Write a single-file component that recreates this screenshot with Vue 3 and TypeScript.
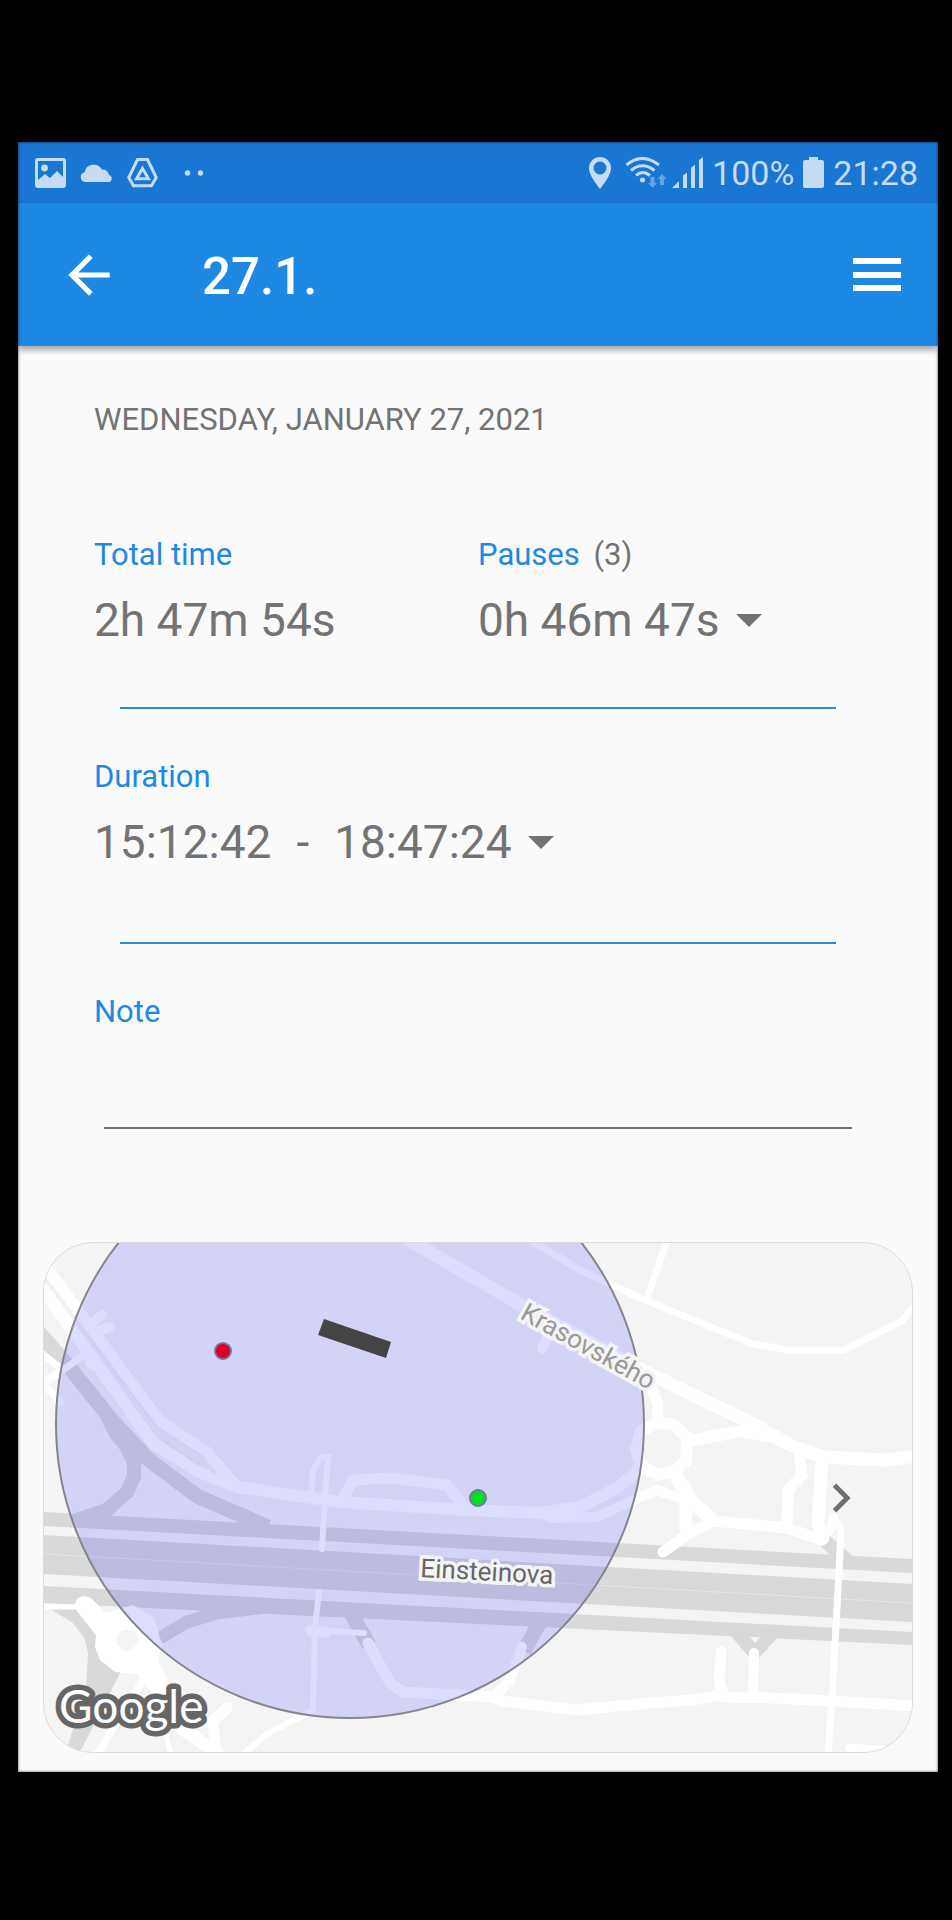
<script setup lang="ts">
import { ref } from 'vue'

interface Road {
  d: string
  w: number
}

const note = ref('')
const day = { short: '27.1.', full: 'Wednesday, January 27, 2021' }
const total = '2h 47m 54s'
const pauses = { count: 3, time: '0h 46m 47s' }
const duration = { from: '15:12:42', to: '18:47:24' }

const ramps: Road[] = [
  { d: 'M36 1329L70 1368L110 1418L149 1460L197 1496L268 1527', w: 15 },
  { d: 'M106 1414L116 1434L126 1446L134 1463V1477L127 1492L107 1510L77 1520', w: 14 },
  { d: 'M160 1638L187 1622L217 1613L267 1607', w: 13 },
  { d: 'M351 1613L369 1645', w: 15 },
  { d: 'M540 1622L524 1651', w: 15 },
]

const roads: Road[] = [
  { d: 'M40 1259L160 1421L207 1452L237 1487', w: 11 },
  { d: 'M40 1285L153 1443L197 1471L237 1487L340 1502L467 1510L540 1513L580 1507L617 1488L641 1468', w: 12 },
  { d: 'M90 1325L102 1315M97 1331L110 1327', w: 10 },
  { d: 'M63 1370L84 1355M40 1352L63 1370M44 1382L63 1370M42 1383L61 1403', w: 7 },
  { d: 'M92 1360V1364', w: 12 },
  { d: 'M311 1495L313 1470L321 1457H328L325 1497L322 1549', w: 6 },
  { d: 'M319 1592L315 1627L313 1710L267 1734L243 1754', w: 6 },
  { d: 'M308 1630L364 1633', w: 6 },
  { d: 'M311 1631L326 1632', w: 11 },
  { d: 'M44 1607H80', w: 5 },
  { d: 'M227 1708L213 1721L216 1754', w: 11 },
  { d: 'M143 1680L97 1755', w: 7 },
  { d: 'M163 1723L171 1755', w: 5 },
  { d: 'M407 1239L523 1306L640 1369L683 1390L757 1426L790 1445L823 1457L887 1460L915 1456', w: 13 },
  { d: 'M527 1238L580 1270L640 1298L750 1343L787 1350H844L903 1320L915 1304', w: 7 },
  { d: 'M668 1238L647 1298', w: 7 },
  { d: 'M542 1349L547 1338', w: 10 },
  { d: 'M649 1380L658 1405L657 1422', w: 11 },
  { d: 'M641 1431L657 1423L673 1424L687 1437L686 1461L675 1471L658 1475L641 1466L636 1449Z', w: 12 },
  { d: 'M690 1441L740 1431L773 1437L797 1448', w: 12 },
  { d: 'M675 1474L692 1502L713 1520', w: 14 },
  { d: 'M540 1513L553 1518L597 1517L640 1497L657 1490L686 1500', w: 10 },
  { d: 'M686 1500V1530', w: 13 },
  { d: 'M663 1552L690 1533L713 1521L787 1528L822 1540', w: 11 },
  { d: 'M799 1450L802 1475L788 1490L787 1527', w: 11 },
  { d: 'M822 1460L820 1490L818 1523L823 1538', w: 13 },
  { d: 'M833 1517L830 1531', w: 9 },
  { d: 'M834 1518L841 1531L838 1590L832 1697L828 1755', w: 7 },
  { d: 'M368 1643L390 1683L403 1692L493 1697L502 1701L577 1710L650 1703L693 1700L722 1695L730 1698L753 1697L830 1701L915 1706', w: 11 },
  { d: 'M522 1647L510 1680L493 1698', w: 10 },
  { d: 'M721 1652L719 1682L724 1697', w: 11 },
  { d: 'M754 1653L753 1697', w: 10 },
  { d: 'M850 1748L890 1751', w: 9 },
  { d: 'M344 1496L353 1480L390 1478L447 1485L465 1508', w: 11 },
]
</script>

<template>
  <div class="page">
    <div class="screen">
      <div class="status">
        <div class="status-left">
          <svg class="ic-img" viewBox="0 0 31 30">
            <path fill-rule="evenodd" d="M3 0H28Q31 0 31 3V27Q31 30 28 30H3Q0 30 0 27V3Q0 0 3 0ZM3 3V22L10 16L15 20L22 13L28 19V3Z" />
            <circle cx="9.500" cy="10" r="3.400" />
          </svg>
          <svg class="ic-cloud" viewBox="0 0 33 18">
            <path d="M5 18A5 5 0 0 1 4.500 8.200A9.500 9.500 0 0 1 22 5.500A7 7 0 0 1 29 11A3.600 3.600 0 0 1 29 18Z" />
          </svg>
          <svg class="ic-img" viewBox="0 0 31 30">
            <path class="line" d="M10.500 1.600H20.500L29.200 19.500L24.500 27.800H6.500L1.800 19.500Z" />
            <path class="line" d="M15.500 10.500L21.500 20.800H9.500Z" />
          </svg>
          <svg class="ic-dots" viewBox="0 0 20 6">
            <circle cx="3.500" cy="3" r="2.700" /><circle cx="16.500" cy="3" r="2.700" />
          </svg>
        </div>
        <div class="status-right">
          <svg class="ic-pin" viewBox="0 0 22 32">
            <path fill-rule="evenodd" d="M11 0A11 11 0 0 1 22 11C22 18 16 25 11 32C6 25 0 18 0 11A11 11 0 0 1 11 0ZM11 4.500A6.500 6.500 0 1 0 11 17.500A6.500 6.500 0 1 0 11 4.500Z" />
          </svg>
          <svg class="ic-wifi" viewBox="0 0 42 32">
            <path class="line" d="M1.500 8Q17 -5 34 8M6 13.500Q17 4 29.500 13.500M11 18.500Q17.500 12.500 25 18.500" />
            <circle cx="17.500" cy="23" r="2.500" />
            <path class="dim" d="M25.500 20H29.500V26H32L27.500 31L23 26H25.500ZM35 28V22H32.500L37 17L41.500 22H39V28Z" />
          </svg>
          <svg class="ic-signal" viewBox="0 0 31 32">
            <path d="M0 31L7 24V31ZM11 31V18.500L15 15.500V31ZM19 31V11L23 7.500V31ZM27 31V3L31 0V31Z" />
          </svg>
          <span>100%</span>
          <svg class="ic-batt" viewBox="0 0 21 31">
            <path d="M6 0H15V3H19Q21 3 21 5V29Q21 31 19 31H2Q0 31 0 29V5Q0 3 2 3H6Z" />
          </svg>
          <span>21:28</span>
        </div>
      </div>

      <header class="bar">
        <button class="icon-btn back" aria-label="Back">
          <svg viewBox="0 0 24 24"><path d="M20 11H7.830l5.590-5.590L12 4l-8 8 8 8 1.410-1.410L7.830 13H20v-2z" /></svg>
        </button>
        <h1>{{ day.short }}</h1>
        <button class="icon-btn menu" aria-label="Menu">
          <svg viewBox="0 0 48 34"><path d="M0 0H48V6H0ZM0 14H48V20H0ZM0 27H48V33H0Z" /></svg>
        </button>
      </header>

      <main>
        <p class="date">{{ day.full }}</p>

        <div class="cols">
          <section>
            <h2>Total time</h2>
            <p class="value">{{ total }}</p>
          </section>
          <section>
            <h2>Pauses <span class="count">({{ pauses.count }})</span></h2>
            <button class="value">
              {{ pauses.time }}
              <svg class="caret" viewBox="0 0 26 13"><path d="M0 0H26L13 13Z" /></svg>
            </button>
          </section>
        </div>
        <hr class="first" />

        <section>
          <h2>Duration</h2>
          <button class="value">
            <span class="range"><span>{{ duration.from }}</span><span>-</span><span>{{ duration.to }}</span></span>
            <svg class="caret" viewBox="0 0 26 13"><path d="M0 0H26L13 13Z" /></svg>
          </button>
        </section>
        <hr class="second" />

        <div class="note">
          <label for="note">Note</label>
          <input id="note" v-model="note" type="text" />
        </div>
      </main>

      <div class="map">
        <svg class="tiles" viewBox="44 1243 868 509" role="img" aria-label="Map">
          <g class="highway">
            <path d="M44 1512L912 1559V1573L44 1526ZM44 1535L912 1584V1622L44 1574ZM44 1586L912 1632V1645L44 1603Z" />
            <path d="M50 1609L72 1622L84 1637L88 1653L86 1687L68 1745L80 1752L120 1673L110 1640L80 1609Z" />
            <path d="M730 1635L777 1638L760 1657H749ZM820 1545L831 1556L854 1557L828 1535Z" />
          </g>
          <path v-for="r in ramps" :key="r.d" class="ramp" :d="r.d" :stroke-width="r.w" />
          <path class="median" d="M44 1554L912 1603" />
          <path class="land" d="M750 1637H760L755 1643Z" />
          <path
            class="white"
            fill-rule="evenodd"
            d="M78 1598Q85 1594 92 1599L106 1613L133 1605L155 1618L162 1647L158 1660L170 1687L187 1723L224 1752H204L177 1733L143 1680L137 1674L115 1672L100 1660L95 1647L96 1635L77 1611Q73 1603 78 1598ZM117 1637L123 1630H136L139 1643L128 1652L117 1645Z"
          />
          <path v-for="r in roads" :key="r.d" class="road" :d="r.d" :stroke-width="r.w" />
          <path class="seam" d="M46 1280L157 1427M160 1429L203 1457L199 1465L160 1438M211 1471L215 1474" />
          <circle class="area" cx="350" cy="1424" r="294" />
          <path class="track" d="M324 1319L391 1342L386 1358L318 1335Z" />
          <circle class="dot stop" cx="223" cy="1351" r="8" />
          <circle class="dot start" cx="478" cy="1498" r="8" />
          <text class="place minor" transform="translate(519 1318) rotate(29)">Krasovského</text>
          <text class="place" transform="translate(420 1577) rotate(3)">Einsteinova</text>
          <text class="brand" x="59" y="1723">Google</text>
        </svg>
        <button class="icon-btn next" aria-label="Next">
          <svg viewBox="0 0 24 24"><path d="M10 6L8.590 7.410 13.170 12l-4.580 4.590L10 18l6-6z" /></svg>
        </button>
      </div>
    </div>
  </div>
</template>

<style>
body {
  margin: 0;
  background: #000;
}
</style>

<style scoped>
.page {
  padding: 142px 14px 147px 18px;
  background: #000;
  font-family: Roboto, 'Noto Sans', sans-serif;
  color: #737373;
}
.screen {
  position: relative;
  background: #fafafa;
  padding-bottom: 19px;
}
.screen::after {
  content: '';
  position: absolute;
  inset: 0;
  box-shadow: inset 0 0 3px rgba(0, 0, 0, 0.7);
  pointer-events: none;
}
svg {
  display: block;
  fill: currentColor;
}
h1,
h2,
p {
  margin: 0;
  font-weight: 400;
}
button {
  border: 0;
  padding: 0;
  background: none;
  font: inherit;
  color: inherit;
  cursor: pointer;
}
.status {
  display: flex;
  justify-content: space-between;
  align-items: center;
  height: 61px;
  padding: 0 20px 0 17px;
  background: #1976d2;
  color: #c5dcf4;
  font-size: 34px;
  line-height: 40px;
}
.status-left,
.status-right {
  display: flex;
  align-items: center;
}
.status-left {
  gap: 14px;
}
.status-right {
  gap: 9px;
}
.line {
  fill: none;
  stroke: currentColor;
  stroke-width: 3;
}
.dim {
  opacity: 0.45;
}
.ic-img {
  width: 31px;
  height: 30px;
}
.ic-cloud {
  width: 33px;
  height: 18px;
}
.ic-dots {
  width: 20px;
  height: 6px;
  margin-left: 12px;
}
.ic-pin {
  width: 22px;
  height: 32px;
  margin-right: 5px;
}
.ic-wifi {
  width: 42px;
  height: 32px;
  margin-right: -4px;
}
.ic-signal {
  width: 31px;
  height: 32px;
}
.ic-batt {
  width: 21px;
  height: 31px;
}
.bar {
  display: flex;
  align-items: center;
  height: 143px;
  padding: 0 37px 0 40px;
  background: #1e88e5;
  color: #fff;
  box-shadow: 0 4px 6px rgba(0, 0, 0, 0.35);
}
.bar h1 {
  flex: 1;
  margin-left: 82px;
  padding-top: 4px;
  font-size: 51px;
  line-height: 60px;
  font-weight: 500;
}
.back svg {
  width: 62px;
  height: 62px;
}
.menu svg {
  width: 48px;
  height: 34px;
}
main {
  padding: 56px 76px 0;
}
.date {
  font-size: 31px;
  line-height: 36px;
  text-transform: uppercase;
}
.cols {
  display: grid;
  grid-template-columns: 1fr 1fr;
  margin-top: 99px;
}
h2,
label {
  display: block;
  font-size: 31px;
  line-height: 36px;
  color: #1e88e5;
}
.count {
  margin-left: 6px;
  color: #737373;
}
.value {
  display: flex;
  align-items: center;
  gap: 16px;
  margin-top: 20px;
  font-size: 46px;
  line-height: 54px;
}
.caret {
  width: 26px;
  height: 13px;
}
.range {
  display: flex;
  gap: 25px;
}
hr {
  height: 2px;
  margin: 0 26px 50px;
  border: 0;
  background: #2f87da;
}
.first {
  margin-top: 60px;
}
.second {
  margin-top: 73px;
}
.note input {
  display: block;
  box-sizing: border-box;
  width: calc(100% - 20px);
  height: 99px;
  margin: 0 10px;
  padding: 0 0 20px;
  border: 0;
  border-bottom: 2px solid #737373;
  outline: 0;
  background: none;
  font: inherit;
  font-size: 46px;
  color: inherit;
}
.map {
  position: relative;
  margin: 113px 25px 0;
  border: 1px solid #dcdcdc;
  border-radius: 50px;
  overflow: hidden;
  background: #f4f4f4;
}
.tiles {
  width: 100%;
  height: auto;
}
.highway {
  fill: #d9d9d9;
}
.ramp {
  fill: none;
  stroke: #d9d9d9;
}
.median {
  stroke: #e6e6e6;
  stroke-width: 1;
}
.land {
  fill: #f4f4f4;
}
.white {
  fill: #fff;
}
.road {
  fill: none;
  stroke: #fff;
  stroke-linecap: round;
}
.seam {
  fill: none;
  stroke: #f0f0f2;
  stroke-width: 2;
}
.area {
  fill: rgba(0, 0, 255, 0.133);
  stroke: #85858c;
  stroke-width: 2;
}
.track {
  fill: #444;
}
.dot {
  stroke: #75759a;
  stroke-width: 2;
}
.stop {
  fill: #de0024;
}
.start {
  fill: #00de24;
}
.place {
  font-size: 26px;
  fill: #666;
  stroke: #f4f4f4;
  stroke-width: 7;
  paint-order: stroke;
}
.minor {
  fill: #999;
}
.brand {
  font-family: Lato, sans-serif;
  font-size: 46px;
  font-weight: 400;
  fill: #fff;
  stroke: #666;
  stroke-width: 11;
  stroke-linejoin: round;
  paint-order: stroke;
}
.next {
  position: absolute;
  top: 50%;
  right: 42px;
  transform: translateY(-50%);
  color: #6f6f6f;
}
.next svg {
  width: 58px;
  height: 58px;
}
</style>
